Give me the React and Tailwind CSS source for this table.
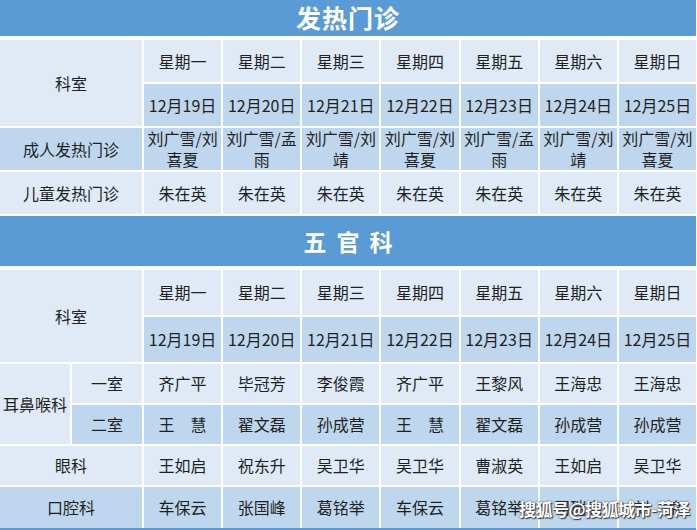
import React from 'react';

const days = ['星期一', '星期二', '星期三', '星期四', '星期五', '星期六', '星期日'];
const dates = ['12月19日', '12月20日', '12月21日', '12月22日', '12月23日', '12月24日', '12月25日'];

const adult = ['刘广雪/刘喜夏', '刘广雪/孟雨', '刘广雪/刘靖', '刘广雪/刘喜夏', '刘广雪/孟雨', '刘广雪/刘靖', '刘广雪/刘喜夏'];
const child = ['朱在英', '朱在英', '朱在英', '朱在英', '朱在英', '朱在英', '朱在英'];

const entRoom1 = ['齐广平', '毕冠芳', '李俊霞', '齐广平', '王黎风', '王海忠', '王海忠'];
const entRoom2 = ['王　慧', '翟文磊', '孙成营', '王　慧', '翟文磊', '孙成营', '孙成营'];
const eye = ['王如启', '祝东升', '吴卫华', '吴卫华', '曹淑英', '王如启', '吴卫华'];
const mouth = ['车保云', '张国峰', '葛铭举', '车保云', '葛铭举', '司瑞高', '刘　锦'];

const light = 'bg-[#dfeaf6]';
const dark = 'bg-[#bfd7ee]';
const cell = 'flex items-center justify-center text-center text-[16px] leading-[21px] text-[#1f1f1f]';

const Bar = ({ children, className = '' }) => (
  <div className={`bg-[#5b9bd5] flex items-center justify-center text-white font-bold ${className}`}>
    {children}
  </div>
);

const Row = ({ items, tone }) =>
  items.map((t, i) => (
    <div key={i} className={`${cell} ${tone} px-[1px]`}>
      {t}
    </div>
  ));

export default function App() {
  return (
    <div
      className="relative w-[697px] h-[530px] overflow-hidden bg-white"
      style={{ fontFamily: '"Noto Sans CJK SC", "Noto Sans", sans-serif' }}
    >
      <div className="w-[696px] flex flex-col">
        <Bar className="h-[36px] text-[25px] tracking-[1px]">发热门诊</Bar>

        {/* fever clinic */}
        <div className="mt-[4px] grid grid-cols-[142px_repeat(7,1fr)] grid-rows-[42px_42px_42px_42px] gap-[2px]">
          <div className={`${cell} ${light} row-span-2`}>科室</div>
          <Row items={days} tone={light} />
          <Row items={dates} tone={dark} />
          <div className={`${cell} ${dark}`}>成人发热门诊</div>
          <Row items={adult} tone={dark} />
          <div className={`${cell} ${light}`}>儿童发热门诊</div>
          <Row items={child} tone={light} />
        </div>

        <Bar className="mt-[2px] h-[50px] text-[23px] tracking-[10px] pl-[10px]">五官科</Bar>

        {/* ENT & others */}
        <div className="mt-[4px] grid grid-cols-[70px_70px_repeat(7,1fr)] grid-rows-[45px_45px_39px_39px_39px_41px] gap-[2px]">
          <div className={`${cell} ${light} col-span-2 row-span-2`}>科室</div>
          <Row items={days} tone={light} />
          <Row items={dates} tone={dark} />

          <div className={`${cell} ${light} row-span-2`}>耳鼻喉科</div>
          <div className={`${cell} ${light}`}>一室</div>
          <Row items={entRoom1} tone={light} />
          <div className={`${cell} ${dark}`}>二室</div>
          <Row items={entRoom2} tone={dark} />

          <div className={`${cell} ${light} col-span-2`}>眼科</div>
          <Row items={eye} tone={light} />
          <div className={`${cell} ${dark} col-span-2`}>口腔科</div>
          <Row items={mouth} tone={dark} />
        </div>

        <div className="h-[6px] bg-[#5b9bd5]" />
      </div>

      {/* watermark */}
      <div
        className="absolute left-[519px] top-[499px] whitespace-nowrap text-[17px] font-bold text-white leading-[20px] tracking-[-0.5px]"
        style={{ textShadow: '0 0 2px #333, 1px 1px 1px #333' }}
      >
        搜狐号@搜狐城市-菏泽
      </div>
    </div>
  );
}
